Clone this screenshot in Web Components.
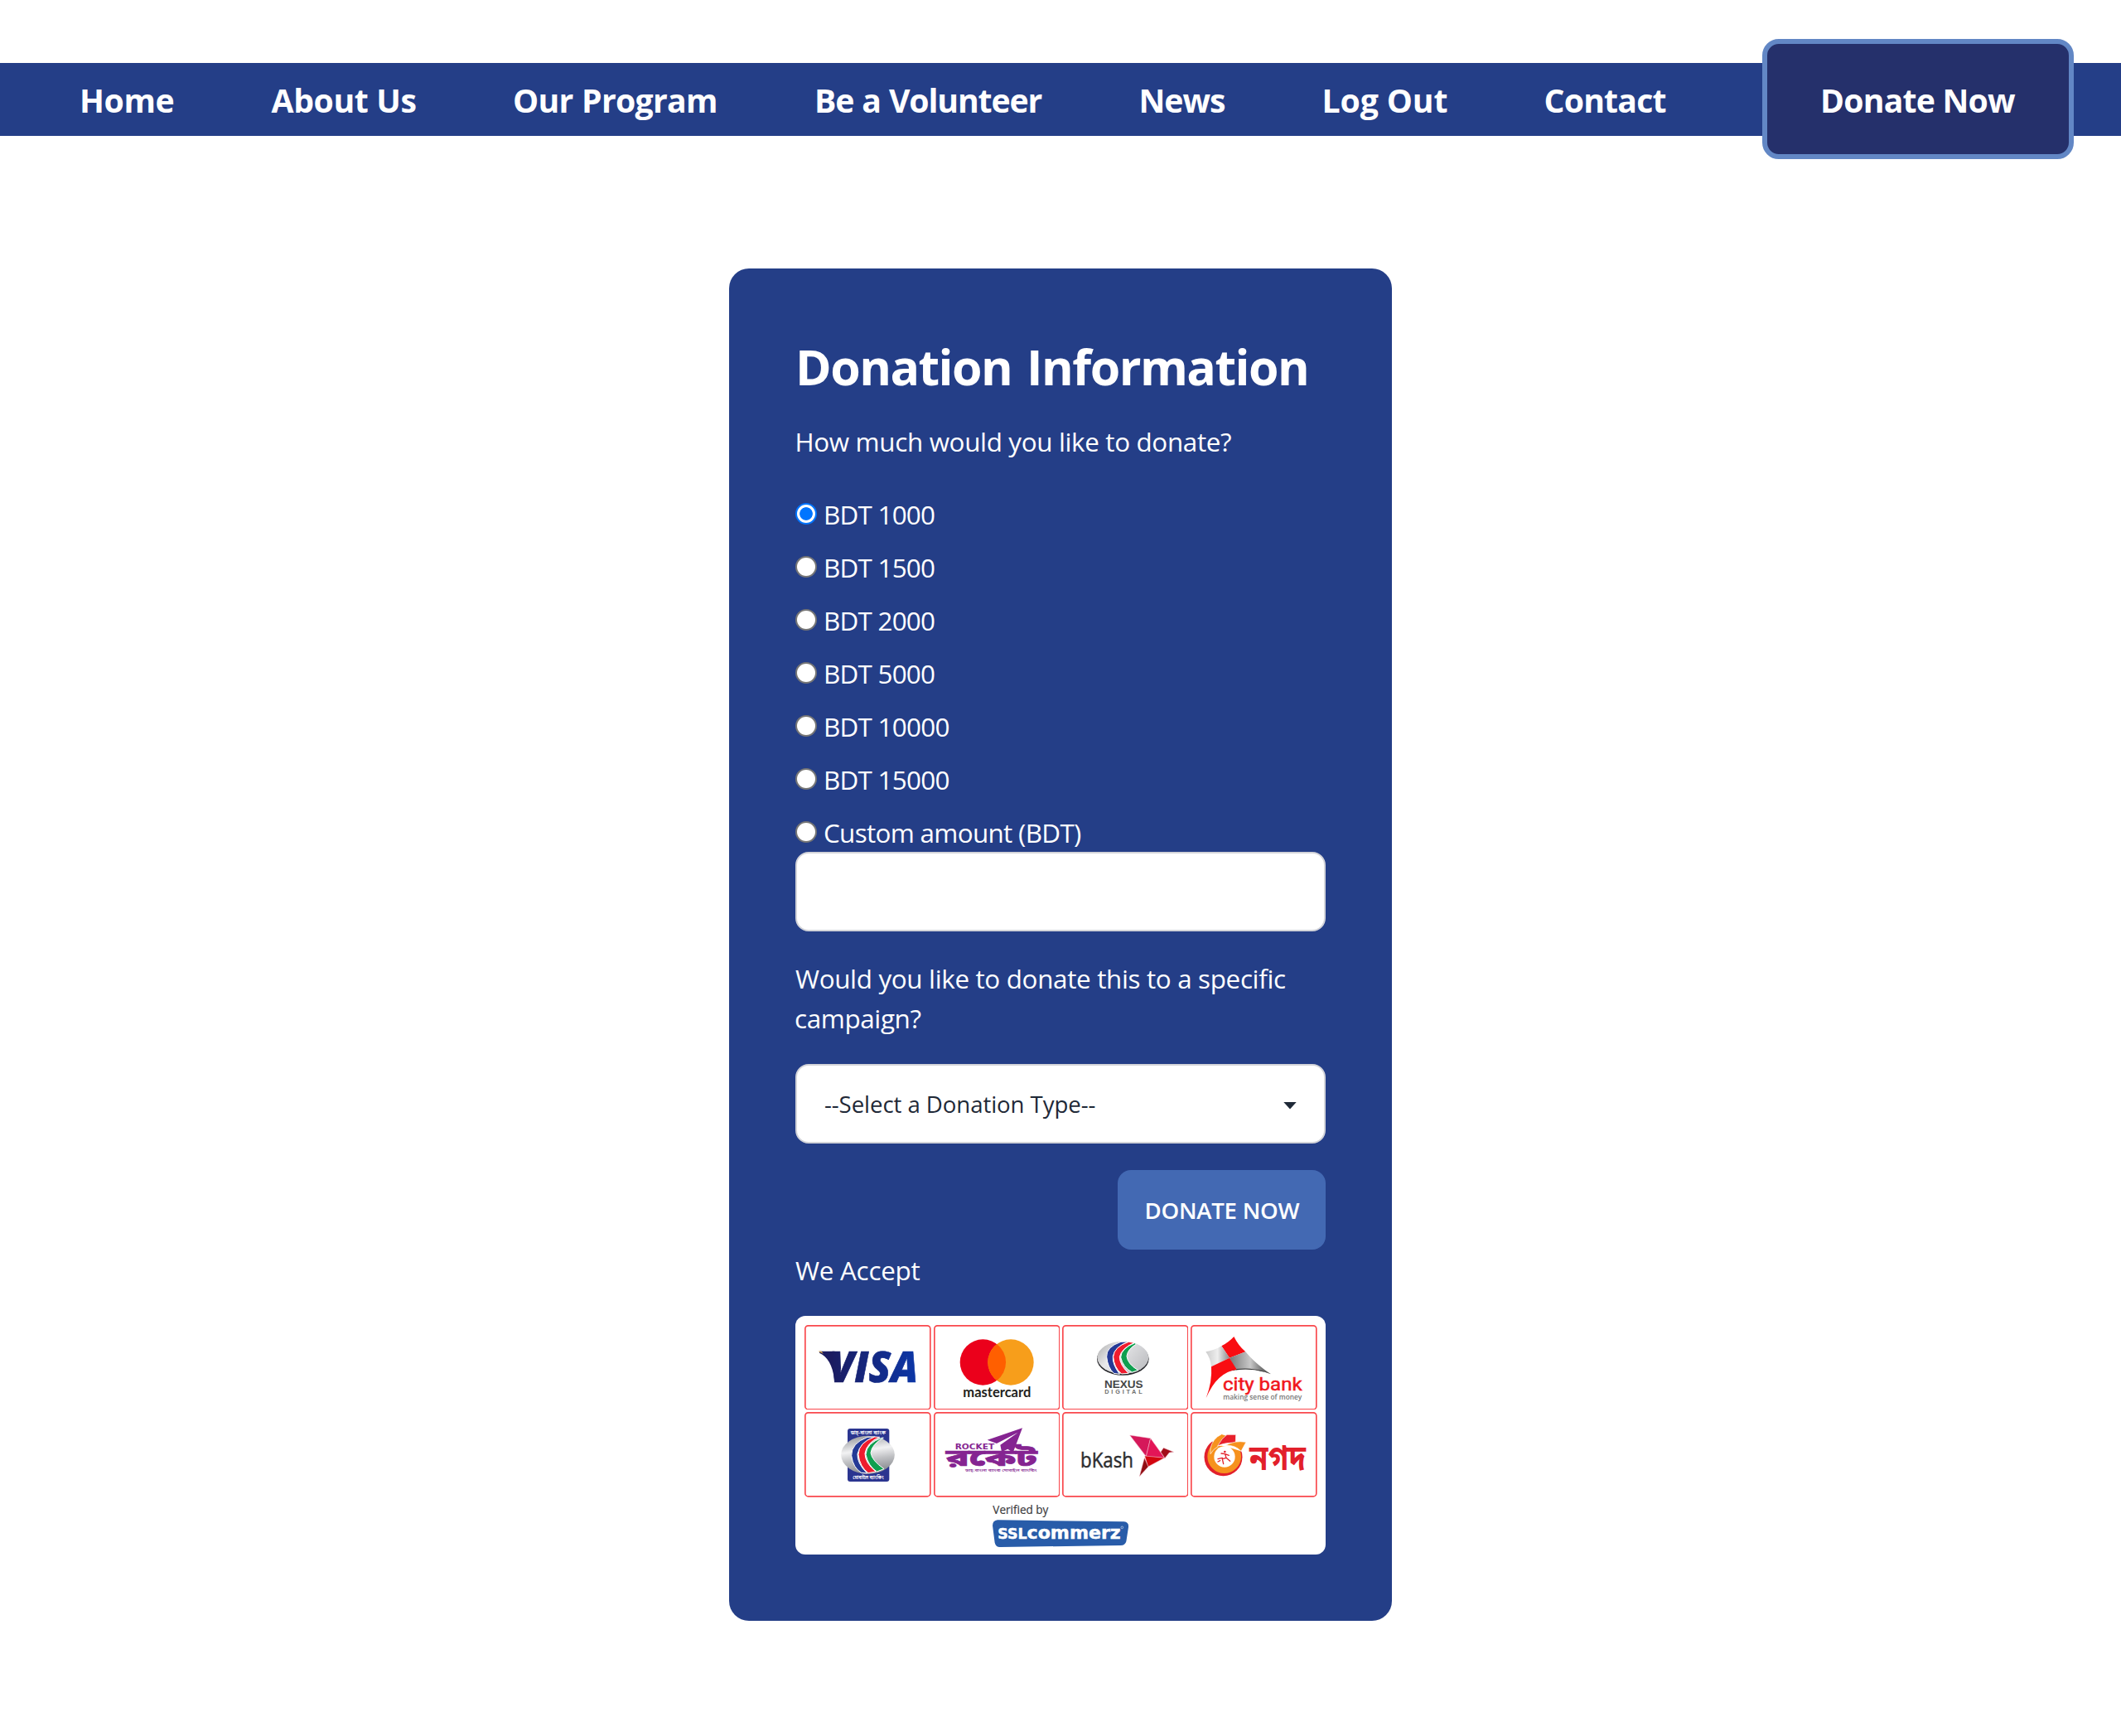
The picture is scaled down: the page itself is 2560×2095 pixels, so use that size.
<!DOCTYPE html>
<html lang="en">
<head>
<meta charset="utf-8">
<title>Donation Information</title>
<style>
body { margin: 0; background: #fff; font-family: "Open Sans", "Noto Sans", sans-serif; color: #fff; }
</style>
</head>
<body>
<donation-page></donation-page>
<script>
const define = (name, html, setup) => customElements.define(name, class extends HTMLElement {
  connectedCallback() {
    if (this.shadowRoot) return;
    const root = this.attachShadow({ mode: 'open' });
    root.innerHTML = html;
    if (setup) setup.call(this, root);
  }
});

/* One line of text tracked so that its visible ink spans exactly "ink" pixels. */
const ctx = document.createElement('canvas').getContext('2d');
define('fit-text', `<style>
  :host { display: block; white-space: nowrap; }
  span { display: block; font-kerning: normal; }
</style><span></span>`, function (root) {
  const span = root.querySelector('span');
  const text = this.getAttribute('text') || '';
  const ink = +this.getAttribute('ink');
  const gap = +this.getAttribute('word-gap') || 0;
  const cs = getComputedStyle(this);
  span.textContent = text;
  ctx.font = `${cs.fontWeight} ${cs.fontSize} ${cs.fontFamily}`;
  const m = ctx.measureText(text);
  const natural = m.actualBoundingBoxLeft + m.actualBoundingBoxRight + gap * (text.split(' ').length - 1);
  span.style.wordSpacing = gap + 'px';
  span.style.letterSpacing = (ink - natural) / (text.length - 1) + 'px';
  span.style.marginLeft = m.actualBoundingBoxLeft + 'px';
  this.style.width = ink + 'px';
});

define('nav-bar', `<style>
  :host { display: flex; align-items: center; height: 88px; margin-top: 76px; background: #243e87;
    font-size: 39.2px; font-weight: 700; line-height: 56px; padding-left: 99px; box-sizing: border-box; }
  a { display: block; margin-top: 2px; }
  .donate { display: flex; align-items: center; justify-content: center; width: 376px; height: 145px; box-sizing: border-box;
    margin: 0 0 1px 116.5px; border: 6px solid #6287c5; border-radius: 20px; background: #25306b; padding-left: 3px; }
</style>
<a><fit-text text="Home" ink="110.5"></fit-text></a>
<a style="margin-left:118px"><fit-text text="About Us" ink="174"></fit-text></a>
<a style="margin-left:119.5px"><fit-text text="Our Program" ink="243" word-gap="1"></fit-text></a>
<a style="margin-left:122px"><fit-text text="Be a Volunteer" ink="271.500" word-gap="1"></fit-text></a>
<a style="margin-left:120px"><fit-text text="News" ink="100.5"></fit-text></a>
<a style="margin-left:120.5px"><fit-text text="Log Out" ink="148"></fit-text></a>
<a style="margin-left:119px"><fit-text text="Contact" ink="145"></fit-text></a>
<div class="donate"><a><fit-text text="Donate Now" ink="233"></fit-text></a></div>`);

define('amount-option', `<style>
  :host { display: block; height: 48px; }
  label { display: flex; align-items: center; height: 48px; }
  input { appearance: none; width: 26px; height: 26px; margin: 0 11px 0 0; border-radius: 50%;
    border: 2px solid #767676; background: #fff; box-sizing: border-box; }
  input:checked { border-color: #0075ff; background: radial-gradient(circle, #0075ff 7.4px, #fff 8.2px); }
  fit-text { line-height: 50px; margin-top: 2px; }
  :host([wide]) input { margin-right: 9px; }
</style><label><input type="radio"></label>`, function (root) {
  root.querySelector('input').checked = this.hasAttribute('checked');
  const t = document.createElement('fit-text');
  t.setAttribute('text', this.getAttribute('label'));
  t.setAttribute('ink', this.getAttribute('ink'));
  root.querySelector('label').append(t);
});

define('drop-down', `<style>
  :host { display: flex; align-items: center; justify-content: space-between; height: 96px; box-sizing: border-box;
    padding: 0 33px 0 34px; border: 2px solid #d3d4d9; border-radius: 16px; background: #fff; color: #1f2937;
    font-size: 27.6px; line-height: 42px; }
  svg { display: block; width: 16px; height: 9px; margin-top: 4px; }
</style><fit-text text="--Select a Donation Type--" ink="325.5"></fit-text>
<svg viewBox="0 0 16 9"><path d="M.3 0h15.4L8 8.6z" fill="#1f2937"/></svg>`);

define('text-field', `<style>
  :host { display: block; height: 96px; }
  input { display: block; width: 100%; height: 96px; box-sizing: border-box; border: 2px solid #d3d4d9; border-radius: 16px;
    background: #fff; padding: 0 34px; font: inherit; outline: 0; }
</style><input type="text">`);

define('submit-button', `<style>
  :host { display: flex; align-items: center; justify-content: center; width: 251px; height: 96px; border-radius: 16px;
    background: #4369b3; color: #fff; font-size: 27.6px; font-weight: 600; line-height: 42px; box-sizing: border-box; padding-left: 3px; }
  fit-text { margin-bottom: 1px; }
</style><fit-text text="DONATE NOW" ink="185"></fit-text>`);

const stripes = (b, r, g) => `<g stroke="#fff" stroke-width="3" stroke-linejoin="round">
  <path fill="#253a96" d="${b}"/><path fill="#ee1c2e" d="${r}"/><path fill="#0f9f4f" d="${g}"/></g>`;

/* Brand marks. Every tile is 458 x 308 units; x and y give its origin. */
const logos = {
  visa: [64, 55, `<defs><linearGradient id="v" x1="0" x2="1"><stop offset="0" stop-color="#1b1b5f"/><stop offset="1" stop-color="#0c37a8"/></linearGradient></defs>
    <path fill="#1b1b60" d="M118 150H172Q185 151 188 168L196 212 172 252Q163 176 118 156Z"/>
    <path fill="#e8b04a" d="M113 150h12l8 9z"/>
    <text x="155" y="263" font-family="Open Sans" font-weight="800" font-style="italic" font-size="155" fill="url(#v)" stroke="url(#v)" stroke-width="2" textLength="320" lengthAdjust="spacingAndGlyphs">VISA</text>`],
  mastercard: [529, 55, `<circle cx="707" cy="190" r="83" fill="#eb001b"/><circle cx="808" cy="190" r="83" fill="#f79e1b"/>
    <path d="M757.500 124A83 83 0 0 1 757.500 256A83 83 0 0 1 757.500 124Z" fill="#ff5f00"/>
    <text x="635" y="315" font-family="Lato" font-weight="700" font-size="49" fill="#231f20" textLength="246" lengthAdjust="spacingAndGlyphs">mastercard</text>`],
  nexus: [35, 55, `<defs><linearGradient id="n" x1="0" x2="1" y2=".5"><stop offset="0" stop-color="#aaa"/><stop offset=".4" stop-color="#e8e8ea"/><stop offset="1" stop-color="#c4c5c8"/></linearGradient></defs>
    <ellipse cx="255" cy="178" rx="94" ry="59" fill="#25262a"/><ellipse cx="255" cy="173" rx="93" ry="59" fill="url(#n)"/>
    ${stripes('M248 116Q194 134 196 170Q200 210 222 230L243 233Q216 196 219 168Q228 132 276 115Z', 'M276 116Q222 134 220 170Q222 208 250 232L275 230Q243 198 243 170Q250 140 296 119Z', 'M298 120Q248 140 247 172Q255 208 288 226L310 219Q272 196 269 168Q272 142 304 124Z')}
    <text x="188" y="284" font-family="Liberation Sans" font-weight="700" font-size="40" fill="#454545" textLength="140" lengthAdjust="spacingAndGlyphs">NEXUS</text>
    <text x="189" y="305" font-family="Liberation Sans" font-weight="700" font-size="22" fill="#707070" textLength="136">DIGITAL</text>`],
  city: [501, 55, `<defs><linearGradient id="c" x1="0" x2="1"><stop offset="0" stop-color="#777"/><stop offset=".5" stop-color="#c8c8c8"/><stop offset="1" stop-color="#333"/></linearGradient>
    <linearGradient id="d" x1="0" x2="1"><stop offset="0" stop-color="#ccc"/><stop offset=".5" stop-color="#eee"/><stop offset="1" stop-color="#888"/></linearGradient></defs>
    <path fill="#f90d12" d="M658 97Q640 117 613 131L642 174 700 152Q674 130 658 97Z"/>
    <path fill="url(#d)" d="M556 152Q590 146 613 131L642 174 576 206Q573 175 556 152Z"/>
    <path fill="url(#c)" d="M642 174L700 152Q735 195 792 233Q730 208 666 219Z"/>
    <path fill="#333" d="M792 233Q720 205 640 222Q610 230 592 255Q620 222 668 214Q735 206 792 233Z"/>
    <path fill="#f90d12" d="M576 206L642 174 668 216Q596 226 557 320Q580 260 576 206Z"/>
    <text x="618" y="293" font-family="Roboto" font-weight="400" font-size="66" fill="#f0161c" stroke="#f0161c" stroke-width="1.500" textLength="287" lengthAdjust="spacingAndGlyphs">city bank</text>
    <text x="619" y="325" font-family="Open Sans" font-weight="600" font-size="27" fill="#777" textLength="285" lengthAdjust="spacingAndGlyphs">making sense of money</text>`],
  dbbl: [64, 372, `<defs><linearGradient id="s" y1="0" y2="1" x2=".2"><stop offset="0" stop-color="#8d8f94"/><stop offset=".45" stop-color="#f2f2f3"/><stop offset=".7" stop-color="#bfc0c3"/><stop offset="1" stop-color="#8d8f94"/></linearGradient></defs>
    <rect x="220" y="432" width="151" height="192" rx="9" fill="#2b3590"/>
    <ellipse cx="293.500" cy="527" rx="97" ry="69" fill="url(#s)"/>
    ${stripes('M292 463Q233 485 234 530Q240 575 270 592L291 594Q254 558 256 524Q266 482 318 462Z', 'M318 462Q260 482 259 526Q264 570 295 593L322 588Q283 556 283 522Q290 482 336 463Z', 'M346 465Q288 484 286 526Q295 568 326 588L352 578Q308 548 304 520Q308 488 350 466Z')}
    <text x="231" y="453" font-family="Noto Sans Bengali" font-weight="600" font-size="20" fill="#fff" textLength="127" lengthAdjust="spacingAndGlyphs">ডাচ্-বাংলা ব্যাংক</text>
    <text x="239" y="615" font-family="Noto Sans Bengali" font-weight="600" font-size="20" fill="#fff" textLength="112" lengthAdjust="spacingAndGlyphs">মোবাইল ব্যাংকিং</text>`],
  rocket: [529, 372, `<path fill="#852491" d="M723 473L850 430 816 519 797 506 775 517 770 491 834 446 757 486Z"/>
    <text x="606" y="506" font-family="DejaVu Sans" font-weight="700" font-size="25" fill="#852491" textLength="143" lengthAdjust="spacingAndGlyphs">ROCKET</text>
    <text x="573" y="567" font-family="Noto Sans Bengali" font-weight="800" font-size="84" fill="#852491" stroke="#852491" stroke-width="2" textLength="331" lengthAdjust="spacingAndGlyphs">রকেট</text>
    <text x="643" y="588" font-family="Noto Sans Bengali" font-weight="500" font-size="12" fill="#852491" textLength="260" lengthAdjust="spacingAndGlyphs">ডাচ্-বাংলা ব্যাংক মোবাইল ব্যাংকিং</text>`],
  bkash: [35, 372, `<text x="101" y="573" font-family="Open Sans" font-size="78" fill="#2d2d2f" stroke="#2d2d2f" stroke-width="1.500" textLength="192" lengthAdjust="spacingAndGlyphs">bKash</text>
    <g stroke="#f3c6d2" stroke-width="1.500" stroke-linejoin="round"><path fill="#d5185a" d="M280 456L355 467 339 533Z"/><path fill="#e31557" d="M355 467L406 538 339 533Z"/>
    <path fill="#d3060f" d="M334 531L406 538 346 570Z"/><path fill="#920d13" d="M333 538L347 570 315 605Z"/><path fill="#a20e1a" d="M392 517L402 502 439 517 423 519 407 539Z"/></g>`],
  nagad: [501, 372, `<circle cx="619.500" cy="535" r="69" fill="#e2202b"/>
    <circle cx="623" cy="533" r="61" fill="#f6921e"/><path fill="#fff" d="M578 475L628 448 704 470 688 515 650 503 615 494 590 496Z"/>
    <circle cx="624" cy="534" r="38" fill="#fff"/>
    <path fill="#f6921e" stroke="#fff" stroke-width="2" d="M573 504Q580 468 614 452L632 458 600 497Q582 507 573 524Z"/>
    <path fill="#e8202b" stroke="#fff" stroke-width="2" d="M599 495Q614 466 633 454L665 454 664 485Q630 480 599 495Z"/>
    <path fill="#f6921e" stroke="#fff" stroke-width="2" d="M628 493Q660 474 702 481L684 514Q662 491 628 493Z"/>
    <g fill="none" stroke="#e2202b" stroke-width="4" stroke-linecap="round" stroke-linejoin="round"><path d="M612 522l14 2 4 14-14 4 4 18M630 538l14 12M600 542l16-4M626 524l14 5M600 552l8-4"/></g><circle cx="625" cy="516" r="4" fill="#e2202b"/>
    <text x="714" y="583" font-family="Noto Sans Bengali" font-weight="700" font-size="128" fill="#e2202b" textLength="204" lengthAdjust="spacingAndGlyphs">নগদ</text>`]
};

define('pay-tile', `<style>
  :host { display: block; }
  svg { display: block; width: 152.67px; height: 102.67px; }
</style><svg></svg>`, function (root) {
  const [x, y, art] = logos[this.getAttribute('brand')];
  const svg = root.querySelector('svg');
  svg.setAttribute('viewBox', `${x} ${y} 458 308`);
  svg.innerHTML = `<rect x="${x + 2.5}" y="${y + 2.5}" width="453" height="303" rx="11" fill="#fff" stroke="#f9484d" stroke-width="5"/>` + art;
});

define('payment-panel', `<style>
  :host { display: block; height: 288px; box-sizing: border-box; padding: 10.6px 0 0 11.3px; border-radius: 12px; background: #fff; }
  .tiles { display: grid; grid-template-columns: repeat(4, 152.67px); gap: 3px 2.6px; }
  .verified { display: block; width: 165px; height: 66px; margin: 1.4px 0 0 227px; }
</style>
<div class="tiles">${Object.keys(logos).map(k => `<pay-tile brand="${k}"></pay-tile>`).join('')}</div>
<svg class="verified" viewBox="54 9 495 198">
  <text x="55" y="66" font-family="Open Sans" font-size="45" fill="#3b3b3d" stroke="#3b3b3d" stroke-width=".6" textLength="201" lengthAdjust="spacingAndGlyphs">Verified by</text>
  <path fill="#285ca9" d="M72 88L530 94Q548 96 546 114L538 166Q534 180 518 180L82 186Q66 187 62 170L54 108Q54 90 72 88Z"/>
  <text y="155" x="73" font-family="DejaVu Sans" font-weight="700" font-size="65" fill="#fff" stroke="#fff" stroke-width="1.500" textLength="445" lengthAdjust="spacingAndGlyphs"><tspan font-size="51">SSL</tspan>commerz</text>
  <circle cx="523" cy="115" r="4" fill="none" stroke="#fff" stroke-width="1.500"/>
</svg>`);

define('donation-card', `<style>
  :host { display: flex; flex-direction: column; width: 800px; height: 1632px; box-sizing: border-box; padding: 80px;
    margin: 160px auto 0; border-radius: 24px; background: #243e87; font-size: 31.4px; line-height: 50px; }
  h1 { margin: 0 0 28px 5px; font-size: 59px; line-height: 76px; font-weight: 700; }
  .line { height: 48px; }
  .stem { margin-left: 2.5px; }
  .amounts { display: flex; flex-direction: column; gap: 16px; margin-top: 40px; }
  .question { margin-top: 32px; }
  drop-down { margin: 32px 0; }
  submit-button { align-self: flex-end; }
  payment-panel { margin-top: 32px; }
</style>
<h1><fit-text text="Donation Information" ink="612" word-gap="4"></fit-text></h1>
<div class="line stem"><fit-text text="How much would you like to donate?" ink="523.5"></fit-text></div>
<div class="amounts">
  <amount-option label="BDT 1000" ink="131" checked></amount-option>
  <amount-option label="BDT 1500" ink="131"></amount-option>
  <amount-option label="BDT 2000" ink="131"></amount-option>
  <amount-option label="BDT 5000" ink="131"></amount-option>
  <amount-option label="BDT 10000" ink="148.5"></amount-option>
  <amount-option label="BDT 15000" ink="148.5"></amount-option>
  <amount-option label="Custom amount (BDT)" ink="309" wide></amount-option>
</div>
<text-field></text-field>
<div class="question">
  <div class="line"><fit-text text="Would you like to donate this to a specific" ink="592"></fit-text></div>
  <div class="line"><fit-text text="campaign?" ink="151.5"></fit-text></div>
</div>
<drop-down></drop-down>
<submit-button></submit-button>
<div class="line"><fit-text text="We Accept" ink="150.500"></fit-text></div>
<payment-panel></payment-panel>`);

define('donation-page', `<style>:host { display: flow-root; width: 2560px; height: 2095px; overflow: hidden; }</style>
<nav-bar></nav-bar>
<donation-card></donation-card>`);
</script>
</body>
</html>
